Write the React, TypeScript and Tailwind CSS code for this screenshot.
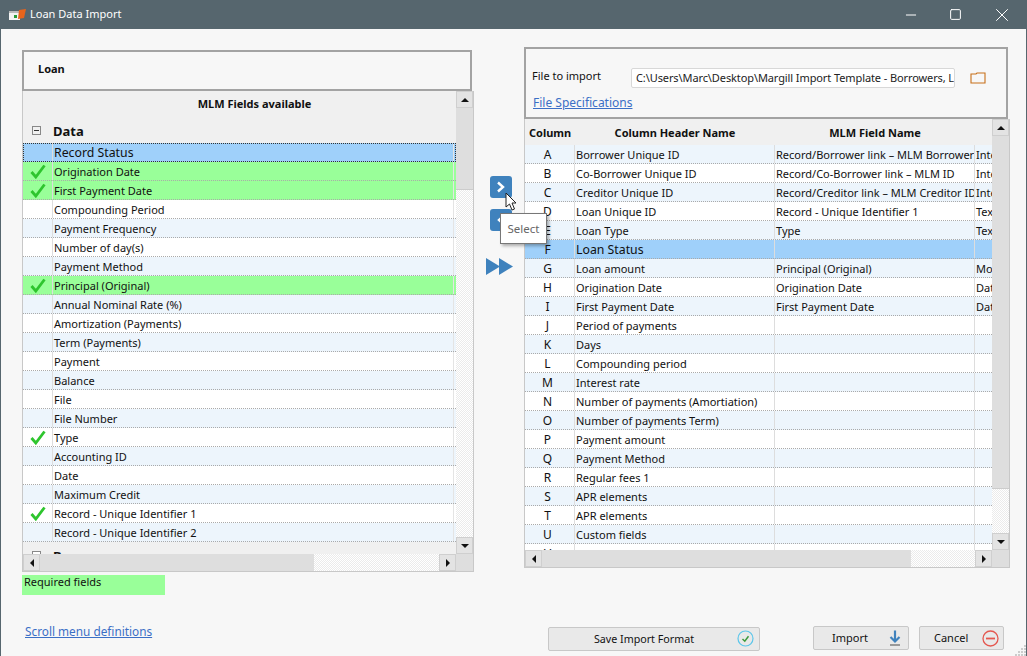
import { Minus, Square, X } from "lucide-react";

const font = "font-['Noto_Sans','Open_Sans',sans-serif]";
const hatch = "bg-[repeating-conic-gradient(#ebebeb_0_25%,#ffffff_0_50%)] bg-[length:2px_2px]";

type Field = { name: string; check?: boolean; green?: boolean; selected?: boolean };

const fields: Field[] = [
  { name: "Record Status", selected: true },
  { name: "Origination Date", check: true, green: true },
  { name: "First Payment Date", check: true, green: true },
  { name: "Compounding Period" },
  { name: "Payment Frequency" },
  { name: "Number of day(s)" },
  { name: "Payment Method" },
  { name: "Principal (Original)", check: true, green: true },
  { name: "Annual Nominal Rate (%)" },
  { name: "Amortization (Payments)" },
  { name: "Term (Payments)" },
  { name: "Payment" },
  { name: "Balance" },
  { name: "File" },
  { name: "File Number" },
  { name: "Type", check: true },
  { name: "Accounting ID" },
  { name: "Date" },
  { name: "Maximum Credit" },
  { name: "Record - Unique Identifier 1", check: true },
  { name: "Record - Unique Identifier 2" },
];

const columns = [
  ["A", "Borrower Unique ID", "Record/Borrower link – MLM Borrower ID", "Integer"],
  ["B", "Co-Borrower Unique ID", "Record/Co-Borrower link – MLM ID", "Integer"],
  ["C", "Creditor Unique ID", "Record/Creditor link – MLM Creditor ID", "Integer"],
  ["D", "Loan Unique ID", "Record - Unique Identifier 1", "Text"],
  ["E", "Loan Type", "Type", "Text"],
  ["F", "Loan Status", "", ""],
  ["G", "Loan amount", "Principal (Original)", "Money"],
  ["H", "Origination Date", "Origination Date", "Date"],
  ["I", "First Payment Date", "First Payment Date", "Date"],
  ["J", "Period of payments", "", ""],
  ["K", "Days", "", ""],
  ["L", "Compounding period", "", ""],
  ["M", "Interest rate", "", ""],
  ["N", "Number of payments (Amortiation)", "", ""],
  ["O", "Number of payments Term)", "", ""],
  ["P", "Payment amount", "", ""],
  ["Q", "Payment Method", "", ""],
  ["R", "Regular fees 1", "", ""],
  ["S", "APR elements", "", ""],
  ["T", "APR elements", "", ""],
  ["U", "Custom fields", "", ""],
  ["V", "Custom fields", "", ""],
];

function ScrollBtn({ dir }: { dir: "up" | "down" | "left" | "right" }) {
  const points = {
    up: "1,7 9,7 5,3",
    down: "1,3 9,3 5,7",
    left: "7,1 7,9 3,5",
    right: "3,1 3,9 7,5",
  }[dir];
  return (
    <div className="w-[17px] h-[17px] shrink-0 bg-[#e3e3e3] border border-[#cfcfcf] flex items-center justify-center">
      <svg width="10" height="10" viewBox="0 0 10 10">
        <polygon points={points} fill="#111" />
      </svg>
    </div>
  );
}

function GreenCheck() {
  return (
    <svg width="16" height="15" viewBox="0 0 16 15">
      <path d="M1.5 8 L5.8 13 L14.5 1.5" fill="none" stroke="#2ec52e" strokeWidth="2.8" />
    </svg>
  );
}

function FieldRow({ field, index }: { field: Field; index: number }) {
  const bg = field.selected
    ? "bg-[#9fd0fa] outline-1 outline-dotted outline-[#333333] -outline-offset-1"
    : field.green
      ? "bg-[#99ff99]"
      : index % 2 === 0
        ? "bg-[#edf5fc]"
        : "bg-white";
  return (
    <div className={`flex h-[19px] shrink-0 border-b border-dotted border-[#aaaaaa] ${bg}`}>
      <div className="w-[30px] shrink-0 flex items-center justify-center border-r border-[#dddddd]">
        {field.check && <GreenCheck />}
      </div>
      <div
        className={`flex-1 pl-[1px] mr-[2px] border-r border-[#e4e4e4] text-[#111] whitespace-nowrap ${
          field.selected ? "text-[12.3px] leading-[19px]" : "text-[11px] leading-[20px]"
        }`}
      >
        {field.name}
      </div>
    </div>
  );
}

function ColumnRow({ row, index }: { row: string[]; index: number }) {
  const selected = row[0] === "F";
  const bg = selected ? "bg-[#9fd0fa]" : index % 2 === 0 ? "bg-[#edf5fc]" : "bg-white";
  return (
    <div className={`flex h-[19px] shrink-0 border-b border-dotted border-[#aaaaaa] leading-[20px] text-[11px] text-[#111] ${bg}`}>
      <div className="w-[50px] shrink-0 text-center pr-[4px] text-[12px] border-r border-[#dddddd]">{row[0]}</div>
      <div className={`w-[200px] shrink-0 pl-[1px] border-r border-[#dddddd] whitespace-nowrap ${selected ? "text-[12.3px] leading-[19px]" : ""}`}>
        {row[1]}
      </div>
      <div className="w-[200px] shrink-0 pl-[1px] pr-[2px] border-r border-[#dddddd] whitespace-nowrap overflow-hidden">{row[2]}</div>
      <div className="flex-1 pl-[1px] whitespace-nowrap overflow-hidden">{row[3]}</div>
    </div>
  );
}

function LeftGrid() {
  return (
    <div className="flex flex-col h-[481px] border border-[#c8c8c8] border-t-0 bg-[#f0f0f0]">
      <div className="flex flex-1 min-h-0">
        <div className="w-[433px] flex flex-col overflow-hidden">
          <div className="h-[25px] shrink-0 flex items-center justify-center pl-[30px] pt-[2px] font-bold text-[11px] text-[#111]">
            MLM Fields available
          </div>
          <div className="h-[27px] shrink-0 flex items-center">
            <div className="w-[9px] h-[9px] ml-[9px] mt-[1px] border border-[#888] flex items-center justify-center bg-[#f0f0f0]">
              <div className="w-[5px] h-px bg-[#333]" />
            </div>
            <span className="ml-[12px] mt-[4px] font-bold text-[13px] text-[#111]">Data</span>
          </div>
          {fields.map((f, i) => (
            <FieldRow key={f.name} field={f} index={i} />
          ))}
          <div className="h-[25px] shrink-0 flex items-start pt-[8px]">
            <div className="w-[9px] h-[9px] ml-[9px] mt-[1px] border border-[#888] bg-white" />
            <span className="ml-[12px] font-bold text-[13px] leading-[13px] text-[#111]">Borrower</span>
          </div>
        </div>
        <div className="w-[17px] flex flex-col">
          <ScrollBtn dir="up" />
          <div className="h-[82px] bg-[#dedede] border-b border-[#cccccc]" />
          <div className={`flex-1 ${hatch}`} />
          <ScrollBtn dir="down" />
        </div>
      </div>
      <div className="flex h-[17px] shrink-0 bg-[#dedede]">
        <ScrollBtn dir="left" />
        <div className="w-[274px] bg-[#dedede]" />
        <div className={`flex-1 ${hatch}`} />
        <ScrollBtn dir="right" />
        <div className="w-[17px] bg-[#dedede]" />
      </div>
    </div>
  );
}

function RightGrid() {
  return (
    <div className="flex flex-col h-[449px] border border-[#c8c8c8] border-t-0 bg-[#f0f0f0]">
      <div className="flex flex-1 min-h-0">
        <div className="w-[468px] flex flex-col overflow-hidden">
          <div className="h-[26px] shrink-0 flex items-center pt-[2px] font-bold text-[11px] text-[#111]">
            <div className="w-[50px] pl-[4px]">Column</div>
            <div className="w-[200px] text-center">Column Header Name</div>
            <div className="w-[200px] text-center">MLM Field Name</div>
          </div>
          {columns.map((r, i) => (
            <ColumnRow key={r[0]} row={r} index={i} />
          ))}
        </div>
        <div className="w-[17px] flex flex-col">
          <ScrollBtn dir="up" />
          <div className="h-[353px] bg-[#dedede] border-b border-[#cccccc]" />
          <div className={`flex-1 ${hatch}`} />
          <ScrollBtn dir="down" />
        </div>
      </div>
      <div className="flex h-[17px] shrink-0 bg-[#dedede]">
        <ScrollBtn dir="left" />
        <div className="w-[369px] bg-[#dedede]" />
        <div className={`flex-1 ${hatch}`} />
        <ScrollBtn dir="right" />
        <div className="w-[17px] bg-[#dedede]" />
      </div>
    </div>
  );
}

function MoveButtons() {
  return (
    <div className="relative w-[50px] shrink-0 flex flex-col items-center pt-[147px]">
      <div className="w-[22px] h-[22px] ml-[3px] rounded-[3px] bg-[#3f82bd] flex items-center justify-center">
        <svg width="10" height="12" viewBox="0 0 10 12">
          <path d="M2 1.5 L7 6 L2 10.5" fill="none" stroke="#fff" strokeWidth="2.4" />
        </svg>
      </div>
      <div className="w-[22px] h-[22px] ml-[3px] mt-[11px] rounded-[3px] bg-[#3f82bd] flex items-center justify-center">
        <svg width="10" height="12" viewBox="0 0 10 12">
          <path d="M8 1.5 L3 6 L8 10.5" fill="none" stroke="#fff" strokeWidth="2.4" />
        </svg>
      </div>
      <svg className="mt-[27px] ml-[2px]" width="28" height="17" viewBox="0 0 28 17">
        <polygon points="0,0 14,8.5 0,17" fill="#3f82bd" />
        <polygon points="13,0 27,8.5 13,17" fill="#3f82bd" />
      </svg>
      {/* cursor */}
      <svg className="absolute left-[31px] top-[163px]" width="12" height="20" viewBox="0 0 12 20">
        <path d="M1 1 L1 15 L4.5 12 L7 18 L9.5 17 L7 11 L11 11 Z" fill="#fff" stroke="#222" strokeWidth="1" />
      </svg>
      {/* tooltip */}
      <div className="absolute left-[26px] top-[184px] w-[47px] h-[31px] bg-white border border-[#777] shadow-[2px_2px_3px_rgba(0,0,0,0.3)] flex items-center justify-center text-[11.5px] text-[#666] z-10">
        Select
      </div>
    </div>
  );
}

export default function App() {
  return (
    <div className={`${font} relative w-[1027px] h-[656px] overflow-hidden flex flex-col bg-[#f7f7f7] border-x border-[#56666e]`}>
      <div className="h-[29px] -mx-px shrink-0 bg-[#56666e] flex items-center text-white">
        <svg className="ml-[9px]" width="17" height="12" viewBox="0 0 17 12">
          <rect x="0" y="2" width="11" height="9" fill="#f4f4f4" />
          <rect x="0" y="2" width="11" height="2" fill="#bbbbbb" />
          <polygon points="10,1 17,0 15,9 9,10" fill="#e8641b" />
          <rect x="5" y="6" width="3" height="3" fill="#2a9c3a" />
        </svg>
        <span className="ml-[4px] text-[11px]">Loan Data Import</span>
        <div className="ml-auto flex items-center gap-[30px] pr-[14px]">
          <Minus size={16} strokeWidth={1} absoluteStrokeWidth />
          <Square size={13} strokeWidth={1} absoluteStrokeWidth />
          <X size={22} strokeWidth={1} absoluteStrokeWidth className="-ml-px" />
        </div>
      </div>

      <div className="flex flex-1 pl-[21px]">
        <div className="w-[452px] shrink-0 pt-[21px]">
          <div className="h-[41px] w-[450px] border-2 border-[#a3a3a3] flex items-center pl-[14px] pb-[3px] font-bold text-[11px] text-[#111]">
            Loan
          </div>
          <LeftGrid />
          <div className="mt-[3px] w-[143px] h-[20px] bg-[#99ff99] pl-[2px] text-[11px] leading-[14px] text-[#111]">
            Required fields
          </div>
          <div className="mt-[28px] ml-[3px] text-[11.8px] leading-[16px] text-[#3b6fc6] underline">
            Scroll menu definitions
          </div>
        </div>

        <MoveButtons />

        <div className="w-[486px] shrink-0 pt-[18px]">
          <div className="h-[72px] w-[484px] border-2 border-[#a3a3a3] px-[6px] pt-[19px]">
            <div className="flex items-center h-[20px]">
              <span className="w-[99px] pb-[3px] text-[11px] text-[#111]">File to import</span>
              <div className="w-[324px] h-[20px] bg-white border border-[#d8d8d8] rounded-[2px] pl-[4px] text-[11px] tracking-[-0.1px] leading-[18px] text-[#222] whitespace-nowrap overflow-hidden">
                C:\Users\Marc\Desktop\Margill Import Template - Borrowers, Loans.xlsx
              </div>
              <svg className="ml-[15px]" width="16" height="12" viewBox="0 0 16 12">
                <path d="M1 11 V2 H6 L7 1 H15 V11 Z" fill="none" stroke="#c8701a" strokeWidth="1.1" />
              </svg>
            </div>
            <div className="mt-[7px] ml-[1px] text-[12px] leading-[16px] text-[#3b6fc6] underline">File Specifications</div>
          </div>
          <RightGrid />
          <div className="flex items-start mt-[58px]">
            <div className="ml-[24px] mt-[1px] w-[212px] h-[24px] bg-[#e9e9e9] border border-[#c8c8c8] rounded-[2px] relative flex items-center justify-center pr-[20px] text-[10.7px] text-[#111]">
              Save Import Format
              <svg className="absolute right-[5px] top-[2px]" width="17" height="17" viewBox="0 0 17 17">
                <circle cx="8.5" cy="8.5" r="7.5" fill="none" stroke="#5cc6ea" strokeWidth="1.2" />
                <path d="M5.5 9 L7.8 11.2 L11.5 6.2" fill="none" stroke="#3c9a3c" strokeWidth="1.5" />
              </svg>
            </div>
            <div className="ml-[53px] w-[96px] h-[24px] bg-[#e9e9e9] border border-[#c8c8c8] rounded-[2px] flex items-center justify-between pl-[18px] pr-[7px] text-[11px] text-[#111]">
              Import
              <svg width="12" height="17" viewBox="0 0 12 17">
                <path d="M6 0.5 V11 M1.5 7 L6 11.5 L10.5 7" fill="none" stroke="#3f82bd" strokeWidth="2.2" />
                <rect x="1" y="14" width="10" height="2" fill="#999" />
              </svg>
            </div>
            <div className="ml-[10px] w-[85px] h-[24px] bg-[#e9e9e9] border border-[#c8c8c8] rounded-[2px] flex items-center justify-between pl-[14px] pr-[4px] text-[11px] text-[#111]">
              Cancel
              <svg width="17" height="17" viewBox="0 0 17 17">
                <circle cx="8.5" cy="8.5" r="7.5" fill="none" stroke="#e4574f" strokeWidth="1.3" />
                <rect x="4" y="7.6" width="9" height="1.8" fill="#e4574f" />
              </svg>
            </div>
          </div>
        </div>
      </div>

      {/* resize grip */}
      <svg className="absolute right-0 bottom-0" width="13" height="13" viewBox="0 0 13 13">
        <path d="M11 2 h2 v2 h-2 z M8 5 h2 v2 h-2 z M11 5 h2 v2 h-2 z M5 8 h2 v2 h-2 z M8 8 h2 v2 h-2 z M11 8 h2 v2 h-2 z M2 11 h2 v2 h-2 z M5 11 h2 v2 h-2 z M8 11 h2 v2 h-2 z M11 11 h2 v2 h-2 z" fill="#cccccc" />
      </svg>
    </div>
  );
}
